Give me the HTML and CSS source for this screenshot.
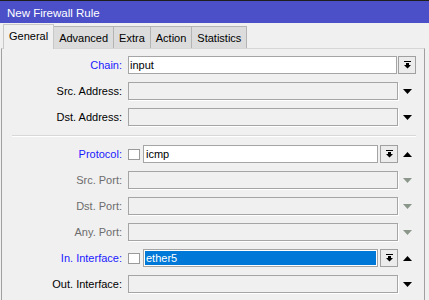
FILE: index.html
```html
<!DOCTYPE html>
<html>
<head>
    <title>New Firewall Rule</title>
    <link rel="stylesheet" href="styles.css">
</head>
<body>
    <div id="Window">
        <div class="titlebar">New Firewall Rule</div>

        <div class="tabs">
            <span class="tab active">General</span>
            <span class="tab">Advanced</span>
            <span class="tab">Extra</span>
            <span class="tab">Action</span>
            <span class="tab">Statistics</span>
        </div>

        <div id="Properties">

            <div class="row">
                <span class="label link">Chain:</span>
                <div class="field">
                    <span class="box value chain">input</span>
                    <span class="button"><svg width="7" height="8" viewBox="0 0 7 8"><path d="M0 0h7v1H0zM2 2h3v2h2L3.5 7.5 0 4h2z"/></svg></span>
                </div>
            </div>

            <div class="row">
                <span class="label">Src. Address:</span>
                <div class="field">
                    <span class="box wide"></span>
                    <svg class="arrow" width="9" height="5" viewBox="0 0 9 5"><path d="M0 0h9L4.5 5z"/></svg>
                </div>
            </div>

            <div class="row">
                <span class="label">Dst. Address:</span>
                <div class="field">
                    <span class="box wide"></span>
                    <svg class="arrow" width="9" height="5" viewBox="0 0 9 5"><path d="M0 0h9L4.5 5z"/></svg>
                </div>
            </div>

            <div class="separator"></div>

            <div class="row">
                <span class="label link">Protocol:</span>
                <div class="field">
                    <span class="check"></span>
                    <span class="box value short">icmp</span>
                    <span class="button"><svg width="7" height="8" viewBox="0 0 7 8"><path d="M0 0h7v1H0zM2 2h3v2h2L3.5 7.5 0 4h2z"/></svg></span>
                    <svg class="arrow" width="9" height="5" viewBox="0 0 9 5"><path d="M0 5h9L4.5 0z"/></svg>
                </div>
            </div>

            <div class="row">
                <span class="label disabled">Src. Port:</span>
                <div class="field">
                    <span class="box wide"></span>
                    <svg class="arrow off" width="9" height="5" viewBox="0 0 9 5"><path d="M0 0h9L4.5 5z"/></svg>
                </div>
            </div>

            <div class="row">
                <span class="label disabled">Dst. Port:</span>
                <div class="field">
                    <span class="box wide"></span>
                    <svg class="arrow off" width="9" height="5" viewBox="0 0 9 5"><path d="M0 0h9L4.5 5z"/></svg>
                </div>
            </div>

            <div class="row">
                <span class="label disabled">Any. Port:</span>
                <div class="field">
                    <span class="box wide"></span>
                    <svg class="arrow off" width="9" height="5" viewBox="0 0 9 5"><path d="M0 0h9L4.5 5z"/></svg>
                </div>
            </div>

            <div class="row">
                <span class="label link">In. Interface:</span>
                <div class="field">
                    <span class="check"></span>
                    <span class="box value short"><span class="selected">ether5</span></span>
                    <span class="button"><svg width="7" height="8" viewBox="0 0 7 8"><path d="M0 0h7v1H0zM2 2h3v2h2L3.5 7.5 0 4h2z"/></svg></span>
                    <svg class="arrow" width="9" height="5" viewBox="0 0 9 5"><path d="M0 5h9L4.5 0z"/></svg>
                </div>
            </div>

            <div class="row">
                <span class="label">Out. Interface:</span>
                <div class="field">
                    <span class="box wide"></span>
                    <svg class="arrow" width="9" height="5" viewBox="0 0 9 5"><path d="M0 0h9L4.5 5z"/></svg>
                </div>
            </div>

        </div>
    </div>
</body>
</html>
```

FILE: styles.css
```css
body { margin: 0; background-color: #f0f0f0; font-family: "Liberation Sans", Arial, sans-serif; font-size: 11px; color: #000; }
div#Window { width: 429px; height: 300px; display: flex; flex-direction: column; overflow: hidden; }

.titlebar { height: 23px; border-top: solid 1px #1e1e1e; background-color: #4b50c9; color: #fff; padding: 4px 0 0 7px; box-sizing: border-box; line-height: 17px; font-size: 11.5px; flex-shrink: 0; }

.tabs { height: 25px; display: flex; align-items: flex-end; padding-left: 3px; flex-shrink: 0; }
.tab { height: 22px; box-sizing: border-box; padding: 0 5px; line-height: 22px; background-color: #dcdcdc; border: solid 1px #b4b4b4; border-bottom: none; border-left: none; }
.tab.active { height: 25px; line-height: 22px; padding: 0 5px; background-color: #f0f0f0; border: solid 1px #c8c8c8; border-bottom: none; margin-bottom: -1px; position: relative; z-index: 1; }

div#Properties { flex: 1; margin: 0 4px 0 1px; border-top: solid 1px #d6d6d6; border-left: solid 1px #a0a0a0; border-right: solid 1px #a0a0a0; padding-top: 7px; display: flex; flex-direction: column; gap: 8px; }

.row { height: 18px; display: flex; align-items: center; }
.label { width: 120px; text-align: right; margin-right: 6px; flex-shrink: 0; }
.label.link { color: #1a1aff; }
.label.disabled { color: #6d6d6d; }

.field { display: flex; align-items: center; height: 18px; }
.box { height: 18px; box-sizing: border-box; border: solid 1px #a5a5a5; box-shadow: 1px 1px 0 #fff; display: flex; align-items: center; }
.box.value { background-color: #fff; padding-left: 1px; box-shadow: none; }
.box.chain { width: 269px; }
.box.wide { width: 270px; }
.box.short { width: 235px; margin-right: 2px; padding-left: 2px; }

.check { width: 12px; height: 11px; box-sizing: border-box; border: solid 1px #9a9a9a; background-color: #fff; margin-right: 3px; }

.selected { flex: 1; height: 14px; line-height: 14px; margin-right: 1px; margin-left: -1px; padding-left: 1px; background-color: #0078d7; color: #fff; }

.button { width: 18px; height: 18px; box-sizing: border-box; border: solid 1px #a0a0a0; background-color: #ececec; margin-left: 1px; display: flex; align-items: center; justify-content: center; }
.box.short + .button { margin-left: 0; }
.button svg { fill: #000; }

.arrow { margin-left: 5px; fill: #000; }
.arrow.off { fill: #8b978b; }

.separator { height: 1px; margin: 1px 8px 0 10px; background-color: #d8d8d8; border-bottom: solid 1px #fff; }
```
